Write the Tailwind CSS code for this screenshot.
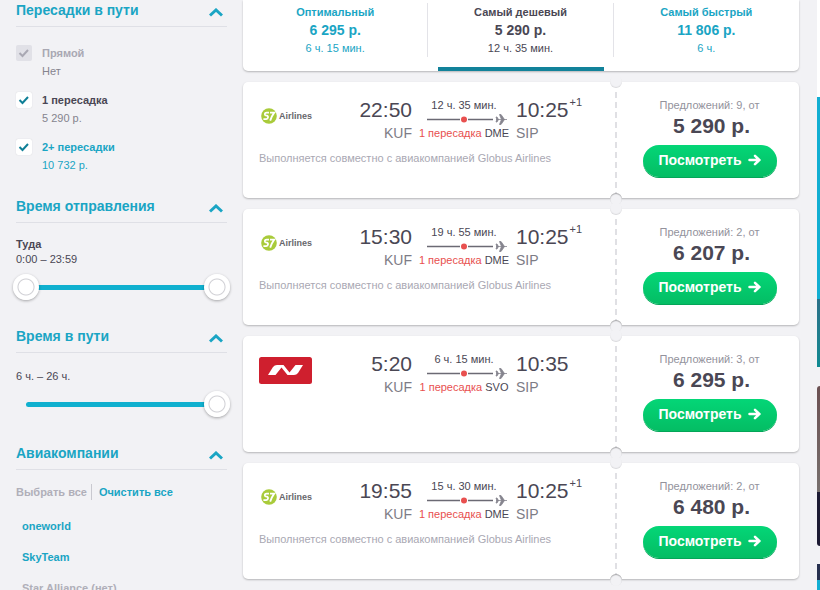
<!DOCTYPE html>
<html lang="ru">
  <head>
    <meta charset="UTF-8" />
    <meta name="viewport" content="width=device-width, initial-scale=1.0" />
    <title>Авиабилеты KUF – SIP</title>
    <script src="https://cdn.jsdelivr.net/npm/@tailwindcss/browser@4"></script>
  </head>
  <body
    class="flex h-screen overflow-hidden bg-[#f2f2f5] font-['Liberation_Sans',Arial,sans-serif] text-[11px] text-[#4a4754]"
  >
    <!-- filters -->
    <aside class="w-[243px] shrink-0 px-4">
      <section class="pb-[22px]">
        <h2 class="flex items-center justify-between border-b border-[#dfe0e6] pr-1 pb-[6px] text-[14px] leading-5 font-bold text-[#1aa5c4]">
          Пересадки в пути
          <button type="button" aria-label="Свернуть: Пересадки в пути" class="cursor-pointer pt-1">
            <svg class="h-[9px] w-[14px]" viewBox="0 0 14 9" fill="none" stroke="currentColor" stroke-width="3"><path d="M1 7.500 7 2l6 5.500" /></svg>
          </button>
        </h2>

        <div class="flex flex-col gap-[11px] pt-[17px]">
          <div class="flex gap-[10px]">
            <span class="mt-[1px] grid size-4 shrink-0 text-[#a9a8b3]">
              <input id="stops-0" type="checkbox" checked disabled class="peer col-start-1 row-start-1 size-4 appearance-none rounded-[2px] bg-[#e1e1e7]" />
              <svg class="pointer-events-none invisible col-start-1 row-start-1 size-4 peer-checked:visible" viewBox="0 0 16 16" fill="none" stroke="currentColor" stroke-width="2"><path d="M3.500 8l3 3L12 5" /></svg>
            </span>
            <label for="stops-0" class="leading-[18px]">
              <b class="block text-[#a9a8b3]">Прямой</b>
              <span class="block text-[#85848e]">Нет</span>
            </label>
          </div>
          <div class="flex gap-[10px]">
            <span class="mt-[1px] grid size-4 shrink-0 text-[#0f7f97]">
              <input id="stops-1" type="checkbox" checked class="peer col-start-1 row-start-1 size-4 appearance-none rounded-[2px] bg-white shadow-[0_0_1px_#c4c4cc]" />
              <svg class="pointer-events-none invisible col-start-1 row-start-1 size-4 peer-checked:visible" viewBox="0 0 16 16" fill="none" stroke="currentColor" stroke-width="2"><path d="M3.500 8l3 3L12 5" /></svg>
            </span>
            <label for="stops-1" class="leading-[18px]">
              <b class="block">1 пересадка</b>
              <span class="block text-[#85848e]">5 290 р.</span>
            </label>
          </div>
          <div class="flex gap-[10px]">
            <span class="mt-[1px] grid size-4 shrink-0 text-[#0f7f97]">
              <input id="stops-2" type="checkbox" checked class="peer col-start-1 row-start-1 size-4 appearance-none rounded-[2px] bg-white shadow-[0_0_1px_#c4c4cc]" />
              <svg class="pointer-events-none invisible col-start-1 row-start-1 size-4 peer-checked:visible" viewBox="0 0 16 16" fill="none" stroke="currentColor" stroke-width="2"><path d="M3.500 8l3 3L12 5" /></svg>
            </span>
            <label for="stops-2" class="leading-[18px] text-[#1aa5c4]">
              <b class="block">2+ пересадки</b>
              <span class="block">10 732 р.</span>
            </label>
          </div>
        </div>
      </section>

      <section class="pb-[26px]">
        <h2 class="flex items-center justify-between border-b border-[#dfe0e6] pr-1 pb-[6px] text-[14px] leading-5 font-bold text-[#1aa5c4]">
          Время отправления
          <button type="button" aria-label="Свернуть: Время отправления" class="cursor-pointer pt-1">
            <svg class="h-[9px] w-[14px]" viewBox="0 0 14 9" fill="none" stroke="currentColor" stroke-width="3"><path d="M1 7.500 7 2l6 5.500" /></svg>
          </button>
        </h2>
        <div class="pt-[14px] leading-[15px]">
          <b class="block">Туда</b>
          <span class="block">0:00 – 23:59</span>
        </div>
        <!-- two range inputs share one track -->
        <div class="-mx-[3px] mt-[7px] grid items-center">
          <div class="col-start-1 row-start-1 mx-[13px] h-[5px] rounded-full bg-[#10b0cf]"></div>
          <input type="range" aria-label="Вылет не раньше" min="0" max="1439" value="0" class="pointer-events-none col-start-1 row-start-1 h-[26px] w-full appearance-none bg-transparent [&::-webkit-slider-thumb]:pointer-events-auto [&::-webkit-slider-thumb]:size-[26px] [&::-webkit-slider-thumb]:appearance-none [&::-webkit-slider-thumb]:rounded-full [&::-webkit-slider-thumb]:bg-[radial-gradient(circle,#fff_7px,#cfcfd4_8px,#fff_9px)] [&::-webkit-slider-thumb]:shadow-[0_1px_3px_#00000055]" />
          <input type="range" aria-label="Вылет не позже" min="0" max="1439" value="1439" class="pointer-events-none col-start-1 row-start-1 h-[26px] w-full appearance-none bg-transparent [&::-webkit-slider-thumb]:pointer-events-auto [&::-webkit-slider-thumb]:size-[26px] [&::-webkit-slider-thumb]:appearance-none [&::-webkit-slider-thumb]:rounded-full [&::-webkit-slider-thumb]:bg-[radial-gradient(circle,#fff_7px,#cfcfd4_8px,#fff_9px)] [&::-webkit-slider-thumb]:shadow-[0_1px_3px_#00000055]" />
        </div>
      </section>

      <section class="pb-[26px]">
        <h2 class="flex items-center justify-between border-b border-[#dfe0e6] pr-1 pb-[6px] text-[14px] leading-5 font-bold text-[#1aa5c4]">
          Время в пути
          <button type="button" aria-label="Свернуть: Время в пути" class="cursor-pointer pt-1">
            <svg class="h-[9px] w-[14px]" viewBox="0 0 14 9" fill="none" stroke="currentColor" stroke-width="3"><path d="M1 7.500 7 2l6 5.500" /></svg>
          </button>
        </h2>
        <label for="duration" class="block pt-4 leading-[15px]">6 ч. – 26 ч.</label>
        <div class="-mx-[3px] mt-[7px] grid items-center">
          <div class="col-start-1 row-start-1 mx-[13px] h-[5px] rounded-full bg-[#10b0cf]"></div>
          <input id="duration" type="range" min="6" max="26" value="26" class="col-start-1 row-start-1 h-[26px] w-full appearance-none bg-transparent [&::-webkit-slider-thumb]:size-[26px] [&::-webkit-slider-thumb]:appearance-none [&::-webkit-slider-thumb]:rounded-full [&::-webkit-slider-thumb]:bg-[radial-gradient(circle,#fff_7px,#cfcfd4_8px,#fff_9px)] [&::-webkit-slider-thumb]:shadow-[0_1px_3px_#00000055]" />
        </div>
      </section>

      <section>
        <h2 class="flex items-center justify-between border-b border-[#dfe0e6] pr-1 pb-[6px] text-[14px] leading-5 font-bold text-[#1aa5c4]">
          Авиакомпании
          <button type="button" aria-label="Свернуть: Авиакомпании" class="cursor-pointer pt-1">
            <svg class="h-[9px] w-[14px]" viewBox="0 0 14 9" fill="none" stroke="currentColor" stroke-width="3"><path d="M1 7.500 7 2l6 5.500" /></svg>
          </button>
        </h2>
        <div class="flex pt-[14px] leading-4 font-bold">
          <button type="button" disabled class="border-r border-[#c9c9d0] pr-1 text-[#b0afb9]">Выбрать все</button>
          <button type="button" class="cursor-pointer pl-[7px] text-[#1aa5c4]">Очистить все</button>
        </div>
        <ul class="flex flex-col gap-[15px] pt-[18px] pl-[6px] leading-4 font-bold">
          <li><a href="#" class="text-[#1aa5c4]">oneworld</a></li>
          <li><a href="#" class="text-[#1aa5c4]">SkyTeam</a></li>
          <li class="text-[#b0afb9]">Star Alliance (нет)</li>
        </ul>
      </section>
    </aside>

    <!-- results -->
    <main class="flex min-w-0 flex-1 flex-col gap-[11px]">
      <nav class="grid shrink-0 grid-cols-3 rounded-b-[5px] bg-white pt-[3px] text-center leading-[18px] shadow-[0_1px_2px_#00000040]">
        <a href="#" class="text-[#1aa5c4]">
          <span class="block border-r border-[#e3e3e8]">
            <b class="block">Оптимальный</b>
            <b class="block text-[14px]">6 295 р.</b>
            <span class="block">6 ч. 15 мин.</span>
          </span>
        </a>
        <a href="#" aria-current="true" class="flex flex-col">
          <span class="block border-r border-[#e3e3e8]">
            <b class="block">Самый дешевый</b>
            <b class="block text-[14px]">5 290 р.</b>
            <span class="block">12 ч. 35 мин.</span>
          </span>
          <span class="mx-[10px] mt-[10px] h-1 bg-[#12829a]"></span>
        </a>
        <a href="#" class="text-[#1aa5c4]">
          <b class="block">Самый быстрый</b>
          <b class="block text-[14px]">11 806 р.</b>
          <span class="block">6 ч.</span>
        </a>
      </nav>

      <div id="tickets" class="flex flex-col gap-[11px]"></div>
    </main>

    <!-- banners -->
    <aside class="ml-[18px] flex w-[3px] shrink-0 flex-col">
      <div class="h-[97px] shrink-0 bg-white"></div>
      <div class="h-[202px] shrink-0 bg-[#12aed2]"></div>
      <div class="h-[68px] shrink-0 bg-linear-to-b from-[#2a7088] to-[#0e8a92]"></div>
      <div class="mt-[19px] h-[106px] shrink-0 rounded-tl-[3px] bg-linear-to-b from-[#6b5052] to-[#77706e]"></div>
      <div class="h-[54px] shrink-0 rounded-bl-[3px] bg-[#1c1a33]"></div>
      <div class="mt-[18px] h-4 shrink-0 bg-[#27304f]"></div>
      <div class="h-5 shrink-0 bg-[#12aed2]"></div>
    </aside>

    <script>
      const s7 = `
        <span class="flex items-center gap-[2px] pt-[10px] pl-[2px] text-[9px] leading-4 font-bold text-[#66676c]">
          <svg class="size-4" viewBox="0 0 16 16">
            <circle cx="8" cy="8" r="7.800" fill="#a9cb3a" />
            <path d="M8 4.600H5.600Q4 4.600 3.800 6T5.200 7.700H5.800Q7.200 7.800 7 9.400T5.200 11.200H2.400M9 4.600h4.200Q11 7.500 9.200 12.600" fill="none" stroke="#fff" stroke-width="1.800" />
          </svg>
          Airlines
        </span>`;

      const nordwind = `
        <svg class="mt-[5px] h-[27px] w-[53px]" viewBox="0 0 53 27" role="img" aria-label="Nordwind">
          <rect width="53" height="27" rx="2.500" fill="#cf1f2e" />
          <path d="M9 18 14 10Q15.500 8 18 8h6.500l6 7.500L36.500 8H44l-5 8q-1.500 2-4 2h-6.500l-6-7.500L16.500 18z" fill="#fff" />
        </svg>`;

      const tickets = [
        { logo: s7, from: "22:50", duration: "12 ч. 35 мин.", via: "DME", to: "10:25", nextDay: "+1", note: "Выполняется совместно с авиакомпанией Globus Airlines", offers: 9, price: "5 290 р." },
        { logo: s7, from: "15:30", duration: "19 ч. 55 мин.", via: "DME", to: "10:25", nextDay: "+1", note: "Выполняется совместно с авиакомпанией Globus Airlines", offers: 2, price: "6 207 р." },
        { logo: nordwind, from: "5:20", duration: "6 ч. 15 мин.", via: "SVO", to: "10:35", nextDay: "", note: "", offers: 3, price: "6 295 р." },
        { logo: s7, from: "19:55", duration: "15 ч. 30 мин.", via: "DME", to: "10:25", nextDay: "+1", note: "Выполняется совместно с авиакомпанией Globus Airlines", offers: 2, price: "6 480 р." },
      ];

      const list = document.getElementById("tickets");

      for (const ticket of tickets) {
        const card = document.createElement("article");
        card.className = "flex min-h-[116px] rounded-[5px] bg-white shadow-[0_1px_2px_#00000040]";
        card.innerHTML = `
          <div class="flex-1 pt-4 pl-4">
            <div class="flex gap-[9px]">
              <div class="flex-1">${ticket.logo}</div>
              <div class="text-right">
                <div class="text-[21px] leading-6">${ticket.from}</div>
                <div class="text-[14px] leading-[22px] text-[#7d7c86]">KUF</div>
              </div>
              <div class="flex w-[86px] flex-col items-center whitespace-nowrap">
                <div class="leading-[14px]">${ticket.duration}</div>
                <svg class="h-[14px] w-20 self-end" viewBox="0 0 80 14">
                  <path d="M0 7.500h33M41 7.500h25" stroke="#6b6a74" stroke-width="1.500" />
                  <circle cx="37" cy="7.500" r="3" fill="#e8504f" />
                  <path d="M69 7.500h11M72.500 2.500h1.500L77.500 7.500 74 12.500h-1.500L74.500 7.500zM69 5h1l1.500 2.500L70 10h-1l.8-2.500z" fill="#85848e" stroke="#85848e" stroke-width=".8" />
                </svg>
                <div class="leading-[14px]"><span class="text-[#e8504f]">1 пересадка</span> ${ticket.via}</div>
              </div>
              <div class="w-[99px]">
                <div class="flex text-[21px] leading-6">${ticket.to}<sup class="top-0 pl-[1px] text-[11px] leading-2">${ticket.nextDay}</sup></div>
                <div class="text-[14px] leading-[22px] text-[#7d7c86]">SIP</div>
              </div>
            </div>
            <p class="pt-[6px] leading-4 text-[#a9a8b3]">${ticket.note}</p>
          </div>
          <div class="relative w-[184px] border-l-2 border-dashed border-[#e0e0e4] pt-[14px] pl-[3px] text-center">
            <span class="absolute -top-[6px] -left-[7px] size-3 rounded-full bg-[#f2f2f5] shadow-[inset_0_-1px_1px_#00000018]"></span>
            <span class="absolute -bottom-[7px] -left-[7px] size-3 rounded-full bg-[#f2f2f5] shadow-[inset_0_1px_1px_#00000050]"></span>
            <div class="leading-[18px] text-[#93929c]">Предложений: ${ticket.offers}, от</div>
            <div class="pl-1 text-[21px] leading-6 font-bold">${ticket.price}</div>
            <button type="button" class="mx-auto mt-[7px] flex h-8 w-[134px] cursor-pointer items-center justify-center gap-[6px] rounded-full bg-linear-to-b from-[#04d677] to-[#04bd64] pb-[2px] text-[14px] font-bold text-white shadow-[0_1px_0_#04a558]">
              Посмотреть
              <svg class="h-3 w-[13px]" viewBox="0 0 13 12" fill="none" stroke="currentColor" stroke-width="2.500" stroke-linecap="round" stroke-linejoin="round"><path d="M1.500 6h10M7 1.800 11.300 6 7 10.200" /></svg>
            </button>
          </div>`;
        list.appendChild(card);
      }
    </script>
  </body>
</html>
